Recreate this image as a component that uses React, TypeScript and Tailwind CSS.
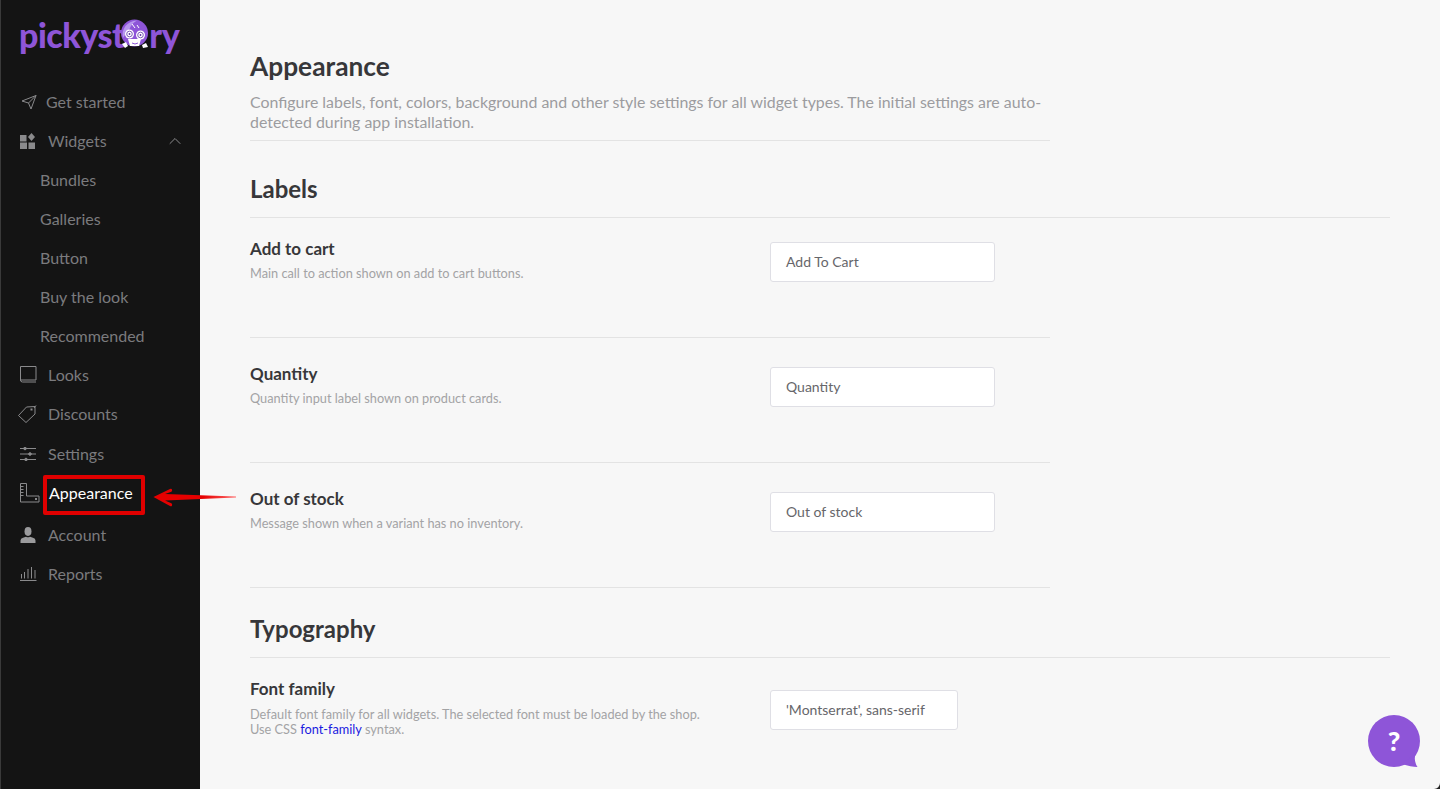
import { ChevronUp } from 'lucide-react';
import type { ReactNode } from 'react';

function PlaneIcon() {
  return (
    <svg width="17" height="16" viewBox="0 0 17 16" fill="none" stroke="#8a8a8c" strokeWidth="1" strokeLinejoin="round">
      <path d="M16 1.500L2 7l6.500 2L11 15zM16 1.500L8.500 9" />
    </svg>
  );
}

function GridIcon() {
  return (
    <svg width="16" height="16" viewBox="0 0 16 16" fill="#8a8a8c">
      <rect x="0" y="2" width="6.500" height="6.500" />
      <path d="M11.500 0l3.500 4-3.500 4-3.500-4z" />
      <rect x="0" y="9.500" width="7" height="6.500" />
      <rect x="8.500" y="9.500" width="6.500" height="6.500" />
    </svg>
  );
}

function BookIcon() {
  return (
    <svg width="17" height="17" viewBox="0 0 17 17" fill="none" stroke="#8a8a8c" strokeWidth="1">
      <path d="M.5 14.500V.5h15.500v13.500H.5" />
      <path d="M.5 14q0 2 2 2H16" />
    </svg>
  );
}

function TagIcon() {
  return (
    <svg width="19" height="19" viewBox="0 0 19 19" fill="none" stroke="#8a8a8c" strokeWidth="1" strokeLinejoin="round">
      <path d="M17 2.500l-8.500.5L.5 11.500 8 18.500l9-8.500z" />
      <rect x="12.500" y="4.500" width="2" height="2" fill="#8a8a8c" stroke="none" />
      <path d="M16 4l2-2.500" />
    </svg>
  );
}

function SlidersIcon() {
  return (
    <svg width="17" height="14" viewBox="0 0 17 14" fill="none" stroke="#8a8a8c" strokeWidth="1">
      <path d="M0 1.500h16M0 7h16M0 12.500h16" />
      <circle cx="5" cy="1.500" r="1.300" fill="#8a8a8c" />
      <circle cx="10" cy="7" r="1.300" fill="#8a8a8c" />
      <circle cx="6" cy="12.500" r="1.300" fill="#8a8a8c" />
    </svg>
  );
}

function RulerIcon() {
  return (
    <svg width="20" height="20" viewBox="0 0 20 20" fill="none" stroke="#8a8a8c" strokeWidth="1">
      <path d="M.5 .5h6v12.500h12.500v6H.5z" />
      <path d="M.5 3.500h3M.5 6.500h3M.5 9.500h3M.5 12.500h3" />
      <rect x="15" y="15" width="2" height="2" fill="#8a8a8c" stroke="none" />
    </svg>
  );
}

function PersonIcon() {
  return (
    <svg width="16" height="16" viewBox="0 0 16 16" fill="#9a9a9c">
      <ellipse cx="8" cy="4.500" rx="3.500" ry="4.400" />
      <path d="M.5 16v-2.500q0-2 2.500-2.700L6 9.800q2 1 4 0l3 1q2.500 .7 2.500 2.700V16z" />
    </svg>
  );
}

function BarsIcon() {
  return (
    <svg width="17" height="15" viewBox="0 0 17 15" fill="none" stroke="#8a8a8c" strokeWidth="1">
      <path d="M0 14.500h16.500M1.500 12.500V8M4.500 12.500V6M8 12.500V3M11.500 12.500V1M15 12.500V4" />
    </svg>
  );
}

function Mascot() {
  return (
    <svg width="29" height="30" viewBox="0 0 29 30">
      <circle cx="14.500" cy="14" r="13.500" fill="#8e55d8" />
      <path d="M3 19C1 10 7 2 17 1.500c-4 2-6 5-7 7.500s-4 5-7 10z" fill="#b796ee" />
      <path d="M12 5l3 4M17 6l2 3" stroke="#fff" strokeWidth="1" />
      <path d="M8 20h13l-2 7H10z" fill="#fff" />
      <circle cx="9.500" cy="15" r="4.500" fill="#fff" />
      <circle cx="9.500" cy="15" r="2.800" fill="none" stroke="#5d33a6" strokeWidth="0.800" />
      <circle cx="9.500" cy="15" r="0.900" fill="#5d33a6" />
      <circle cx="20.500" cy="16" r="4.500" fill="#fff" />
      <circle cx="20.500" cy="16" r="2.800" fill="none" stroke="#5d33a6" strokeWidth="0.800" />
      <circle cx="20.500" cy="16" r="0.900" fill="#5d33a6" />
      <path d="M2 25l4-2 2 4-3 2zM22 26l4-2 2 4-5 1z" fill="#fff" />
      <path d="M12 24q3 2 6 0" stroke="#8e55d8" strokeWidth="1" fill="none" />
    </svg>
  );
}

function NavItem({ icon, label, iconBox = 'w-[28px]' }: { icon: ReactNode; label: string; iconBox?: string }) {
  return (
    <div className="flex h-[39px] items-center pl-[19px] text-[16px] text-[#7b7b7e]">
      <div className={`flex shrink-0 items-center ${iconBox}`}>{icon}</div>
      <span>{label}</span>
    </div>
  );
}

function SubItem({ label }: { label: string }) {
  return <div className="flex h-[39px] items-center pl-[39px] text-[16px] text-[#7b7b7e]">{label}</div>;
}

function Sidebar() {
  return (
    <aside className="relative h-[789px] w-[200px] shrink-0 border-l border-[#3a3a3a] bg-[#141414]">
      <div className="flex h-[82px] items-start pl-[18px] pt-[13px] text-[34px] font-black leading-[44px] tracking-[-0.5px] text-[#8e55d8]">
        <span>pickyst</span>
        <span className="relative z-10 -ml-[4px] mt-[6px] h-[30px] w-[29px] shrink-0">
          <Mascot />
        </span>
        <span>ry</span>
      </div>
      <NavItem icon={<PlaneIcon />} label="Get started" iconBox="w-[26px]" />
      <div className="flex h-[39px] items-center justify-between pl-[19px] pr-[15px] text-[16px] text-[#7b7b7e]">
        <div className="flex items-center">
          <div className="w-[28px]"><GridIcon /></div>
          <span>Widgets</span>
        </div>
        <ChevronUp size={20} strokeWidth={1.200} color="#8a8a8c" />
      </div>
      <SubItem label="Bundles" />
      <SubItem label="Galleries" />
      <SubItem label="Button" />
      <SubItem label="Buy the look" />
      <SubItem label="Recommended" />
      <NavItem icon={<BookIcon />} label="Looks" />
      <div className="-ml-[2px]">
        <NavItem icon={<TagIcon />} label="Discounts" iconBox="w-[30px]" />
      </div>
      <div className="mt-[1px]">
        <NavItem icon={<SlidersIcon />} label="Settings" />
      </div>
      <div className="flex h-[39px] items-start pl-[19px]">
        <div className="mt-[10px] w-[23px] shrink-0"><RulerIcon /></div>
        <div className="mt-[2px] h-[40px] w-[102px] shrink-0 rounded-[2px] border-[4px] border-[#e00000] pl-[2px] text-[16px] leading-[28px] text-white">
          Appearance
        </div>
      </div>
      <div className="mt-[3px]">
        <NavItem icon={<PersonIcon />} label="Account" />
      </div>
      <NavItem icon={<BarsIcon />} label="Reports" />
    </aside>
  );
}

function Field({
  title,
  children,
  value,
  inputClass = 'mt-[5px] w-[225px]',
  descClass = 'mt-[5px]',
}: {
  title: string;
  children: ReactNode;
  value: string;
  inputClass?: string;
  descClass?: string;
}) {
  return (
    <div className="flex w-[800px] items-start">
      <div className="w-[520px] shrink-0">
        <div className="text-[17px] font-bold leading-[24px] text-[#37373a]">{title}</div>
        <div className={`text-[12.750px] leading-[15px] text-[#a3a3a5] ${descClass}`}>{children}</div>
      </div>
      <div
        className={`flex h-[40px] items-center rounded-[3px] border border-[#dfdfe5] bg-white pb-[2px] pl-[15px] text-[14px] text-[#66666a] ${inputClass}`}
      >
        {value}
      </div>
    </div>
  );
}

export default function App() {
  return (
    <div className="relative flex h-[789px] w-[1440px] overflow-hidden bg-[#f7f7f7] font-['Lato',sans-serif]">
      <Sidebar />
      <main className="flex-1 px-[50px]">
        <h1 className="mt-[49px] text-[26.300px] font-bold leading-[34px] text-[#37373a]">Appearance</h1>
        <p className="mt-[9px] w-[800px] border-b border-[#e3e3e3] pb-[8px] text-[15.900px] leading-[20px] text-[#9c9c9f]">
          Configure labels, font, colors, background and other style settings for all widget types. The initial settings are auto-detected during app installation.
        </p>
        <h2 className="mt-[32px] border-b border-[#e3e3e3] pb-[12px] text-[24px] font-bold leading-[32px] text-[#37373a]">Labels</h2>
        <div className="mt-[19px] h-[100px]">
          <Field title="Add to cart" value="Add To Cart">Main call to action shown on add to cart buttons.</Field>
        </div>
        <div className="w-[800px] border-b border-[#e3e3e3]" />
        <div className="mt-[24px] h-[100px]">
          <Field title="Quantity" value="Quantity">Quantity input label shown on product cards.</Field>
        </div>
        <div className="w-[800px] border-b border-[#e3e3e3]" />
        <div className="mt-[24px] h-[100px]">
          <Field title="Out of stock" value="Out of stock">Message shown when a variant has no inventory.</Field>
        </div>
        <div className="w-[800px] border-b border-[#e3e3e3]" />
        <h2 className="mt-[25px] border-b border-[#e3e3e3] pb-[12px] text-[24px] font-bold leading-[32px] text-[#37373a]">Typography</h2>
        <div className="mt-[19px]">
          <Field
            title="Font family"
            value="'Montserrat', sans-serif"
            inputClass="mt-[13px] w-[188px]"
            descClass="mt-[6px]"
          >
            Default font family for all widgets. The selected font must be loaded by the shop.
            <br />
            Use CSS <span className="text-[#1a1ae0]">font-family</span> syntax.
          </Field>
        </div>
      </main>

      {/* annotation arrow */}
      <svg className="absolute left-[150px] top-[485px]" width="90" height="24" viewBox="0 0 90 24">
        <defs>
          <linearGradient id="tail" x1="0" x2="1" y1="0" y2="0">
            <stop offset="0.6" stopColor="#e60000" />
            <stop offset="1" stopColor="#ff6a6a" />
          </linearGradient>
        </defs>
        <path
          d="M3.500 12L20 4q1.500-.6 2 .6t-.6 2.100L15 9l71 2.500v1L15 15.500l6.400 2.800q1.200 .8 .6 2.100t-2 .6z"
          fill="url(#tail)"
        />
      </svg>

      {/* help bubble */}
      <svg className="absolute left-[1368px] top-[715px]" width="54" height="54" viewBox="0 0 54 54">
        <circle cx="26" cy="26" r="26" fill="#8e55d8" />
        <path d="M48 38q-3 7 1.500 14Q43 52 34 49z" fill="#8e55d8" />
      </svg>
      <div className="absolute left-[1368px] top-[715px] flex h-[52px] w-[52px] items-center justify-center text-[27px] font-black text-white">?</div>

      {/* window corner */}
      <svg className="absolute bottom-0 right-0" width="6" height="6" viewBox="0 0 6 6">
        <path d="M6 0A6 6 0 0 1 0 6h6z" fill="#222" />
      </svg>
    </div>
  );
}
